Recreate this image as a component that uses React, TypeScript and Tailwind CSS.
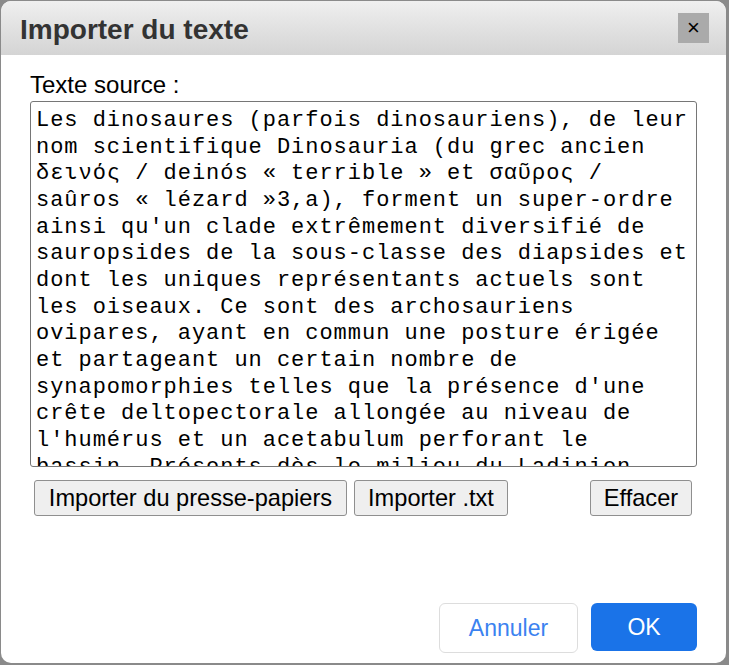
import React from 'react'

const sourceText =
  "Les dinosaures (parfois dinosauriens), de leur nom scientifique Dinosauria (du grec ancien δεινός / deinós « terrible » et σαῦρος / saûros « lézard »3,a), forment un super-ordre ainsi qu'un clade extrêmement diversifié de sauropsides de la sous-classe des diapsides et dont les uniques représentants actuels sont les oiseaux. Ce sont des archosauriens ovipares, ayant en commun une posture érigée et partageant un certain nombre de synapomorphies telles que la présence d'une crête deltopectorale allongée au niveau de l'humérus et un acetabulum perforant le bassin. Présents dès le milieu du Ladinien (Trias moyen), il y a environ 240 millions d'années, les dinosaures deviennent les vertébrés terrestres dominants à partir du Jurassique inférieur."

export default function App() {
  return (
    <div className="w-[729px] h-[665px] bg-[#8a8a8a] pt-[1px] pl-[1px] font-['Liberation_Sans',Arial,sans-serif]">
      <div className="w-[725px] h-[662px] bg-white rounded-[10px] overflow-hidden flex flex-col">
        {/* header */}
        <div className="h-[54px] shrink-0 bg-gradient-to-b from-[#efefef] to-[#d4d4d4] flex items-center justify-between pl-[19px] pr-[17px] pt-[4px]">
          <h1 className="text-[28px] font-bold text-[#333333] leading-none">Importer du texte</h1>
          <button className="-mt-[4px] w-[31px] h-[30px] bg-[#aaaaaa] flex items-center justify-center text-[22px] leading-none text-black">
            ×
          </button>
        </div>

        {/* body */}
        <div className="flex-1 flex flex-col px-[29px] pt-[16px] pb-[10px]">
          <label className="text-[24px] leading-[28px] text-black">Texte source :</label>
          <textarea
            readOnly
            defaultValue={sourceText}
            className="mt-[2px] w-full h-[366px] shrink-0 resize-none overflow-hidden border border-[#767676] rounded-[3px] pt-[6px] pl-[5px] pr-[3px] font-['Liberation_Mono',monospace] text-[22px] tracking-[0.97px] leading-[26.65px] text-black outline-none"
          />

          <div className="mt-[13px] flex items-center">
            <button className="ml-[4px] w-[313px] h-[36px] bg-[#efefef] border border-[#8f8f8f] rounded-[3px] text-[23.6px] text-black">
              Importer du presse-papiers
            </button>
            <button className="ml-[7px] w-[154px] h-[36px] bg-[#efefef] border border-[#8f8f8f] rounded-[3px] text-[23.6px] text-black">
              Importer .txt
            </button>
            <button className="ml-auto mr-[5px] w-[102px] h-[36px] bg-[#efefef] border border-[#8f8f8f] rounded-[3px] text-[23.6px] text-black">
              Effacer
            </button>
          </div>

          <div className="mt-auto flex justify-end items-start gap-[13px]">
            <button className="w-[139px] h-[50px] bg-white border border-[#dddddd] rounded-[6px] text-[23px] text-[#3b82f0]">
              Annuler
            </button>
            <button className="w-[106px] h-[48px] bg-[#1a73e8] rounded-[6px] text-[23px] text-white">
              OK
            </button>
          </div>
        </div>
      </div>
    </div>
  )
}
